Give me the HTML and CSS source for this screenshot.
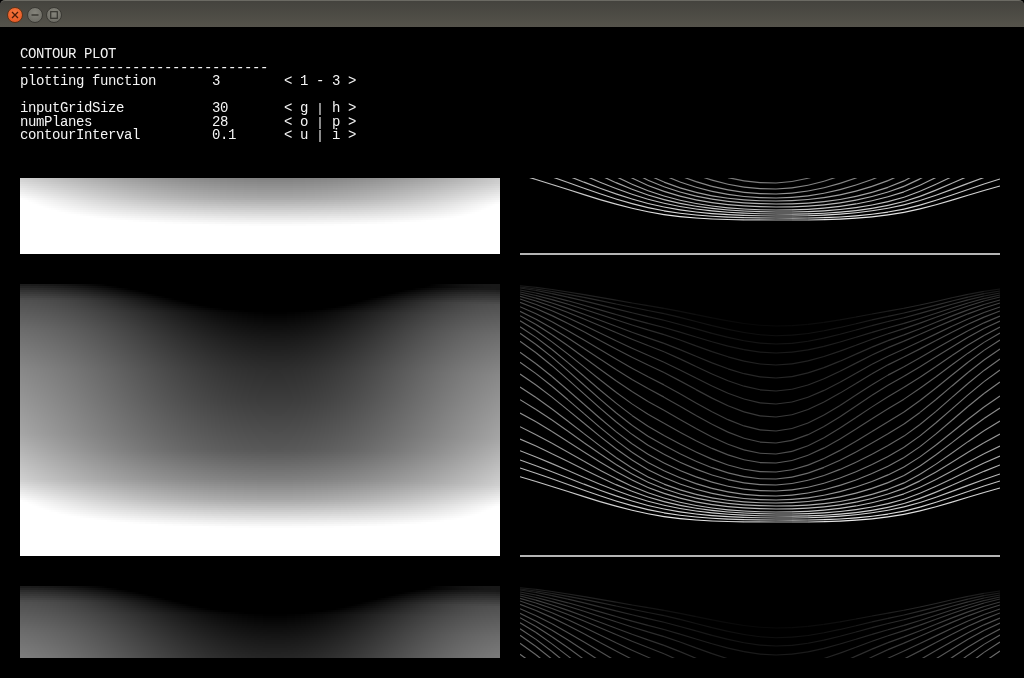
FILE: index.html
```html
<!DOCTYPE html>
<html lang="en">
<head>
<meta charset="utf-8">
<title>CONTOUR PLOT</title>
<link rel="stylesheet" href="styles.css">
</head>
<body>
<header class="titlebar">
  <span class="winbtn close"><svg viewBox="0 0 8 8" width="8" height="8"><path d="M1 1L7 7M7 1L1 7" stroke="#4a1c08" stroke-width="1.3" fill="none"/></svg></span>
  <span class="winbtn"><svg viewBox="0 0 8 8" width="8" height="8"><path d="M0.5 4H7.5" stroke="#35342f" stroke-width="1.4" fill="none"/></svg></span>
  <span class="winbtn"><svg viewBox="0 0 8 8" width="8" height="8"><rect x="0.7" y="0.7" width="6.6" height="6.6" stroke="#35342f" stroke-width="1.2" fill="none"/></svg></span>
</header>
<main class="app">
  <section class="info">
    <div class="row">CONTOUR PLOT</div>
    <div class="row">-------------------------------</div>
    <div class="row params"><span>plotting function</span><span>3</span><span>&lt; 1 - 3 &gt;</span></div>
    <div class="row"></div>
    <div class="row params"><span>inputGridSize</span><span>30</span><span>&lt; g <span class="sep">|</span> h &gt;</span></div>
    <div class="row params"><span>numPlanes</span><span>28</span><span>&lt; o <span class="sep">|</span> p &gt;</span></div>
    <div class="row params"><span>contourInterval</span><span>0.1</span><span>&lt; u <span class="sep">|</span> i &gt;</span></div>
  </section>
  <section class="plots">
    <canvas class="plot" data-kind="heat" data-offset="196" width="480" height="76"></canvas>
    <canvas class="plot" data-kind="lines" data-offset="196" data-base="1" width="480" height="77"></canvas>
    <canvas class="plot" data-kind="heat" data-offset="0" width="480" height="272"></canvas>
    <canvas class="plot" data-kind="lines" data-offset="0" data-base="1" width="480" height="273"></canvas>
    <canvas class="plot" data-kind="heat" data-offset="0" width="480" height="72"></canvas>
    <canvas class="plot" data-kind="lines" data-offset="0" width="480" height="72"></canvas>
  </section>
</main>
<script src="plot.js"></script>
</body>
</html>
```
FILE: styles.css
```css
html, body {
  margin: 0;
  height: 100%;
  background: #000;
  overflow: hidden;
}
.titlebar {
  height: 27px;
  box-sizing: border-box;
  display: flex;
  align-items: center;
  gap: 3.5px;
  padding: 1px 0 0 7px;
  border-radius: 5px 5px 0 0;
  border-top: 1px solid #6b6a63;
  background: linear-gradient(#44433e, #55534b);
}
.winbtn {
  width: 16px;
  height: 16px;
  box-sizing: border-box;
  border-radius: 50%;
  border: 1px solid #3a3934;
  display: flex;
  align-items: center;
  justify-content: center;
  background: radial-gradient(circle at 50% 35%, #85847b, #66655e);
}
.winbtn.close {
  background: radial-gradient(circle at 50% 35%, #f6793f, #e4521f);
  border-color: #5d3319;
}
.app {
  padding: 21px 20px 0;
}
.info {
  font-family: "Liberation Mono", monospace;
  font-size: 14px;
  letter-spacing: -0.4px;
  color: #f4f4f4;
  will-change: transform;
}
.row {
  height: 13.5px;
  line-height: 13.5px;
  white-space: pre;
}
.sep {
  display: inline-block;
  width: 8px;
  font-size: 12.5px;
  letter-spacing: 0;
  text-align: center;
}
.params {
  display: grid;
  grid-template-columns: 192px 72px auto;
}
.plots {
  margin-top: 35.5px;
  display: grid;
  grid-template-columns: 480px 480px;
  grid-template-rows: 76px 272px 72px;
  column-gap: 20px;
  row-gap: 30px;
}
.plot {
  display: block;
}
```
FILE: plot.js
```js
var CU = [0, 0.28, 0.533, 0.78, 1];
var LEVELS = [
  [1.7,3,4,6,8,10,12.3,15,18.3,22.7,27.3,31.7,36.7,42.7,49.3,57.3,68.3,78.3,90,103,115.7,129,142.7,155,166.7,176,184,192.7],
  [22.7,27.7,34,41,47.7,56,64,74,84,96,108,121,134,146,156,165,174,182,189,196,201,206,211,215,219,223,227,231],
  [42,51.7,60,69,81,94,107,120,133,147,159,170,179,188,195,201,207,212,216,219,222,225,228,230,232,234,236,238],
  [26,31,36,42,47.7,54.3,61,69.3,77.7,87.7,97.7,109,121,134,146,158,169,179,188,196,203,208,213,218,222,225,229,232],
  [5,7,9,11,13,16,19,23,27,32,37,43,49,56,65,75,86,98,112,124,137,150,162,172,181,190,197,204]
];
var CENTER_RAMP = [[0,-80],[28,0],[40,12],[54,24],[72,37],[86,46],[116,60],[166,88],[196,128],[216,168],[236,232],[244,255],[272,300]];
var EDGE_RAMP = [[0,24],[6,48],[16,80],[46,108],[86,136],[150,166],[196,208],[212,244],[218,258],[272,320]];

function ramp(table, y) {
  if (y <= table[0][0]) return table[0][1];
  for (var i = 1; i < table.length; i++) {
    if (y <= table[i][0]) {
      var a = table[i - 1], b = table[i];
      return a[1] + (b[1] - a[1]) * (y - a[0]) / (b[0] - a[0]);
    }
  }
  return table[table.length - 1][1];
}

function distance(u) {
  var c = CU[2];
  return u < c ? (u - c) / c : (u - c) / (1 - c);
}

function grey(u, y) {
  var d = distance(u);
  var sCos = (1 - Math.cos(Math.PI * d)) / 2;
  var sPar = d * d;
  var m = Math.min(1, Math.max(0, y / 230));
  var s = sCos + (sPar - sCos) * m;
  var Y = y - (d > 0 ? 5 * d * d : 0);
  var v = ramp(CENTER_RAMP, Y) + (ramp(EDGE_RAMP, Y) - ramp(CENTER_RAMP, Y)) * s;
  return Math.max(0, Math.min(255, v));
}

function level(k, u) {
  var i = 0;
  while (i < 3 && u > CU[i + 1]) i++;
  var tan = function (j) {
    var endScale = 0.6 + 0.4 * k / 27;
    if (j === 0) return endScale * (LEVELS[1][k] - LEVELS[0][k]) / (CU[1] - CU[0]);
    if (j === 4) return endScale * (LEVELS[4][k] - LEVELS[3][k]) / (CU[4] - CU[3]);
    return (LEVELS[j + 1][k] - LEVELS[j - 1][k]) / (CU[j + 1] - CU[j - 1]);
  };
  var h = CU[i + 1] - CU[i], t = (u - CU[i]) / h;
  var t2 = t * t, t3 = t2 * t;
  return (2 * t3 - 3 * t2 + 1) * LEVELS[i][k] + (t3 - 2 * t2 + t) * h * tan(i) +
    (-2 * t3 + 3 * t2) * LEVELS[i + 1][k] + (t3 - t2) * h * tan(i + 1);
}

function drawHeat(ctx, w, h, offset) {
  var img = ctx.createImageData(w, h);
  for (var y = 0; y < h; y++) {
    var band = Math.floor((y + offset) / 2) * 2 + 1;
    for (var x = 0; x < w; x++) {
      var g = Math.round(grey((x + 0.5) / w, band));
      var p = (y * w + x) * 4;
      img.data[p] = img.data[p + 1] = img.data[p + 2] = g;
      img.data[p + 3] = 255;
    }
  }
  ctx.putImageData(img, 0, 0);
}

function drawLines(ctx, w, h, offset, base) {
  var cells = 30;
  ctx.lineWidth = 1.15;
  for (var k = 0; k < 28; k++) {
    for (var i = 0; i < cells; i++) {
      var u0 = i / cells, u1 = (i + 1) / cells;
      var y0 = level(k, u0), y1 = level(k, u1);
      var mid = (u0 + u1) / 2;
      var cap = 176 + 79 * Math.min(1, Math.abs(distance(mid)) * 2.5);
      var heat = grey(mid, (y0 + y1) / 2);
      var g = Math.round(Math.min(cap, 255 * Math.pow(heat / 255, 1.15)));
      ctx.strokeStyle = "rgb(" + g + "," + g + "," + g + ")";
      ctx.beginPath();
      ctx.moveTo(u0 * w, y0 - offset);
      ctx.lineTo(u1 * w, y1 - offset);
      ctx.stroke();
    }
  }
  if (base) {
    ctx.fillStyle = "#b4b4b4";
    ctx.fillRect(0, h - 2, w, 2);
  }
}

document.querySelectorAll(".plot").forEach(function (cv) {
  var ctx = cv.getContext("2d");
  var offset = Number(cv.dataset.offset);
  if (cv.dataset.kind === "heat") drawHeat(ctx, cv.width, cv.height, offset);
  else drawLines(ctx, cv.width, cv.height, offset, cv.dataset.base);
});
```
